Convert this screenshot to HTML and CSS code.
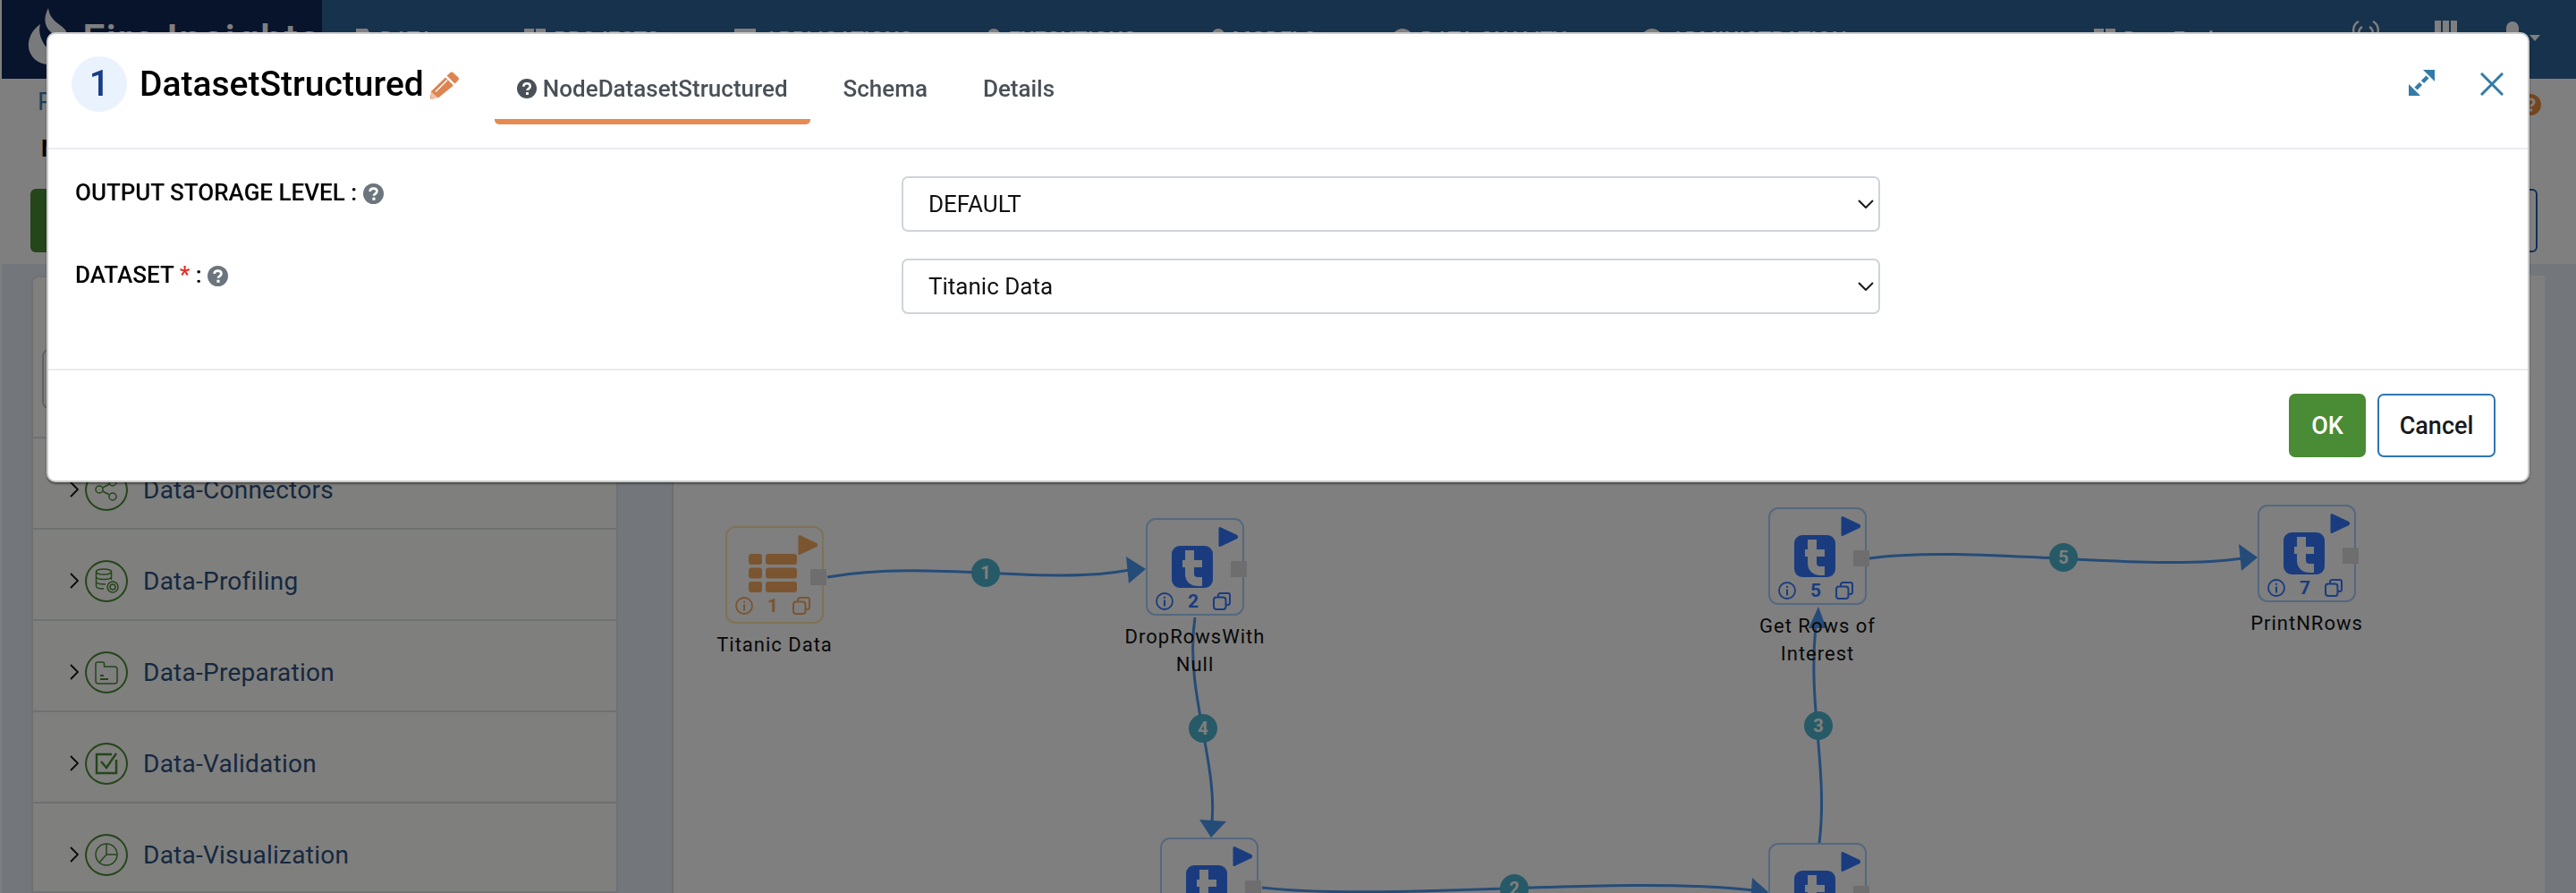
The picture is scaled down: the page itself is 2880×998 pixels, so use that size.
FILE: index.html
```html
<!DOCTYPE html>
<html>
<head>
    <title>Fire Insights - Workflow</title>
    <link rel="stylesheet" href="styles.css">
</head>
<body>
    <svg class="icon-defs" width="0" height="0">
        <symbol id="help" viewBox="0 0 24 24">
            <circle cx="12" cy="12" r="12" fill="currentColor"/>
            <path d="M8 9.5c0-2.4 1.8-3.7 4.1-3.7 2.2 0 4 1.3 4 3.4 0 2.9-3.6 2.8-3.6 5.1" fill="none" stroke="#fff" stroke-width="2.8"/>
            <rect x="10.9" y="16.4" width="3.2" height="3.2" fill="#fff"/>
        </symbol>
        <symbol id="info" viewBox="0 0 20 20">
            <circle cx="10" cy="10" r="9" fill="none" stroke="currentColor" stroke-width="1.8"/>
            <rect x="9" y="8.5" width="2" height="7" fill="currentColor"/>
            <rect x="9" y="4.8" width="2" height="2" fill="currentColor"/>
        </symbol>
        <symbol id="copy" viewBox="0 0 20 20">
            <rect x="1" y="5.5" width="13.5" height="13.5" rx="3" fill="none" stroke="currentColor" stroke-width="2"/>
            <path d="M6 5.5V3.5a2.5 2.5 0 0 1 2.5-2.5H17a2 2 0 0 1 2 2v8.5a2.5 2.5 0 0 1-2.5 2.5h-2" fill="none" stroke="currentColor" stroke-width="2"/>
        </symbol>
        <symbol id="play" viewBox="0 0 22 24">
            <path d="M2 2.5 20 11a1.2 1.2 0 0 1 0 2L2 21.5z" fill="currentColor" stroke="currentColor" stroke-width="3" stroke-linejoin="round"/>
        </symbol>
        <symbol id="tile" viewBox="0 0 46 47">
            <rect width="46" height="47" rx="9" fill="#3478ff"/>
            <path d="M20 5V31Q20 40 30 40H34" fill="none" stroke="#fff" stroke-width="10"/>
            <rect x="12" y="16" width="22" height="8" fill="#fff"/>
        </symbol>
        <symbol id="rows" viewBox="0 0 54 43">
            <rect x="0" y="0" width="15" height="12" rx="3" fill="currentColor"/>
            <rect x="19" y="0" width="35" height="12" rx="3" fill="currentColor"/>
            <rect x="0" y="15.500" width="15" height="12" rx="3" fill="currentColor"/>
            <rect x="19" y="15.500" width="35" height="12" rx="3" fill="currentColor"/>
            <rect x="0" y="31" width="15" height="12" rx="3" fill="currentColor"/>
            <rect x="19" y="31" width="35" height="12" rx="3" fill="currentColor"/>
        </symbol>
        <symbol id="chev" viewBox="0 0 10 20">
            <path d="M1 2 9 10 1 18" fill="none" stroke="currentColor" stroke-width="1.8"/>
        </symbol>
    </svg>

    <div class="page">
        <header class="nav">
            <div class="brand">
                <svg class="flame" viewBox="0 0 50 66" width="50" height="66">
                    <path d="M24 0C18 12 20 20 26 26C30 32 42 32 44 26C40 18 26 16 24 0Z" fill="#fff"/>
                    <path d="M15 18C6 24 1 34 2 44C3 54 12 62 22 63C34 64 44 56 46 46C36 50 24 50 18 38C15 32 13 26 15 18Z" fill="#fff"/>
                </svg>
                <span class="brand-name">Fire Insights</span>
            </div>
            <nav class="nav-items">
                <a class="nav-item"><i class="nav-ico nav-ico-file"></i>DATA</a>
                <a class="nav-item"><i class="nav-ico nav-ico-book"></i>PROJECTS</a>
                <a class="nav-item"><i class="nav-ico nav-ico-win"></i>APPLICATIONS</a>
                <a class="nav-item"><i class="nav-ico nav-ico-small"></i>EXECUTIONS</a>
                <a class="nav-item"><i class="nav-ico nav-ico-small"></i>MODELS</a>
                <a class="nav-item"><i class="nav-ico nav-ico-round"></i>DATA QUALITY</a>
                <a class="nav-item"><i class="nav-ico nav-ico-ring"></i>ADMINISTRATION</a>
            </nav>
            <div class="nav-right">
                <a class="nav-item"><i class="nav-ico nav-ico-book"></i>Data Explorer</a>
                <svg class="nav-wifi" viewBox="0 0 34 20" width="34" height="20">
                    <path d="M6 20C1 12 3 4 9 1M28 20C33 12 31 4 25 1M11 19C8 14 9 9 13 7M23 19C26 14 25 9 21 7" fill="none" stroke="#fff" stroke-width="2.400"/>
                    <circle cx="17" cy="16" r="3" fill="#fff"/>
                </svg>
                <div class="nav-grid"><i></i><i></i><i></i></div>
                <div class="nav-user"><i class="nav-head"></i><i class="nav-caret"></i></div>
            </div>
        </header>

        <section class="subheader">
            <div class="crumbs">
                <span>Pipelines</span>
                <svg class="crumb-help"><use href="#help"/></svg>
            </div>
            <div class="wf-name">Name</div>
            <div class="toolbar">
                <button class="tool-btn tool-save">Save</button>
                <button class="tool-btn tool-run">Run</button>
            </div>
        </section>

        <section class="workspace">
            <div class="panel">
                <aside class="sidebar">
                    <div class="side-head">
                        <input class="side-search" type="text">
                    </div>
                    <div class="side-row">
                        <svg class="side-chev"><use href="#chev"/></svg>
                        <span class="side-ico">
                            <svg viewBox="0 0 28 28" width="28" height="28"><circle cx="6" cy="14" r="4"/><circle cx="21" cy="6" r="4"/><circle cx="21" cy="22" r="4"/><path d="M9.500 12 17.500 8M9.500 16 17.500 20"/></svg>
                        </span>
                        <span class="side-text">Data-Connectors</span>
                    </div>
                    <div class="side-row">
                        <svg class="side-chev"><use href="#chev"/></svg>
                        <span class="side-ico">
                            <svg viewBox="0 0 28 28" width="28" height="28"><ellipse cx="11" cy="4" rx="8.500" ry="3"/><path d="M2.500 4V20C2.500 22 6 23 11 23M19.500 4V13M2.500 9.500C2.500 11.500 6 12.500 11 12.500S19.500 11.500 19.500 9.500M2.500 15C2.500 17 6 18 13 18"/><circle cx="21" cy="21" r="6"/><circle cx="21" cy="21" r="3"/></svg>
                        </span>
                        <span class="side-text">Data-Profiling</span>
                    </div>
                    <div class="side-row">
                        <svg class="side-chev"><use href="#chev"/></svg>
                        <span class="side-ico">
                            <svg viewBox="0 0 28 28" width="28" height="28"><path d="M2 5A2 2 0 0 1 4 3H9.500A2 2 0 0 1 11.500 5V8H23A3 3 0 0 1 26 11V24A3 3 0 0 1 23 27H5A3 3 0 0 1 2 24Z"/><path d="M7 18H11M7 22H16" stroke-width="2"/></svg>
                        </span>
                        <span class="side-text">Data-Preparation</span>
                    </div>
                    <div class="side-row">
                        <svg class="side-chev"><use href="#chev"/></svg>
                        <span class="side-ico">
                            <svg viewBox="0 0 28 28" width="28" height="28"><path d="M25 10V25H3V4H20" stroke-width="2.400"/><path d="M8 12 14 19 25 3" stroke-width="2.400"/></svg>
                        </span>
                        <span class="side-text">Data-Validation</span>
                    </div>
                    <div class="side-row">
                        <svg class="side-chev"><use href="#chev"/></svg>
                        <span class="side-ico">
                            <svg viewBox="0 0 28 28" width="28" height="28"><circle cx="14" cy="14" r="12"/><path d="M14 2V14H26M14 14 6 23"/></svg>
                        </span>
                        <span class="side-text">Data-Visualization</span>
                    </div>
                </aside>
                <div class="gutter"></div>
                <main class="canvas">
                    <svg class="edges" width="2091" height="690" viewBox="754 308 2091 690">
                        <path class="edge" d="M926 645C1040 625 1170 655 1264 637"/>
                        <path class="arrow" d="M1282 636 1260 622 1263 652Z"/>
                        <path class="edge" d="M1337 690C1325 770 1362 850 1356 918"/>
                        <path class="arrow" d="M1355 936 1342 916 1372 918Z"/>
                        <path class="edge" d="M2035 942C2045 860 2022 790 2031 700"/>
                        <path class="arrow" d="M2034 678 2023 702 2043 702Z"/>
                        <path class="edge" d="M2091 624C2200 608 2400 640 2508 624"/>
                        <path class="arrow" d="M2525 623 2504 608 2507 638Z"/>
                        <path class="edge" d="M1412 992C1560 1008 1800 978 1962 995"/>
                        <path class="arrow" d="M1978 997 1960 981 1958 1011Z"/>
                        <g class="badge"><circle cx="1103" cy="640" r="16"/><text x="1103" y="647">1</text></g>
                        <g class="badge"><circle cx="1346" cy="814" r="16"/><text x="1346" y="821">4</text></g>
                        <g class="badge"><circle cx="2034" cy="811" r="16"/><text x="2034" y="818">3</text></g>
                        <g class="badge"><circle cx="2308" cy="623" r="16"/><text x="2308" y="630">5</text></g>
                        <g class="badge"><circle cx="1694" cy="993" r="16"/><text x="1694" y="1000">2</text></g>
                    </svg>

                    <div class="node node-source node-a">
                        <div class="node-box">
                            <svg class="node-play"><use href="#play"/></svg>
                            <svg class="node-rows"><use href="#rows"/></svg>
                            <div class="node-foot">
                                <svg class="foot-ico"><use href="#info"/></svg>
                                <b>1</b>
                                <svg class="foot-ico"><use href="#copy"/></svg>
                            </div>
                            <i class="node-port"></i>
                        </div>
                        <div class="node-label">Titanic Data</div>
                    </div>
                    <div class="node node-b">
                        <div class="node-box">
                            <svg class="node-play"><use href="#play"/></svg>
                            <svg class="node-tile"><use href="#tile"/></svg>
                            <div class="node-foot">
                                <svg class="foot-ico"><use href="#info"/></svg>
                                <b>2</b>
                                <svg class="foot-ico"><use href="#copy"/></svg>
                            </div>
                            <i class="node-port"></i>
                        </div>
                        <div class="node-label">DropRowsWith<br>Null</div>
                    </div>
                    <div class="node node-c">
                        <div class="node-box">
                            <svg class="node-play"><use href="#play"/></svg>
                            <svg class="node-tile"><use href="#tile"/></svg>
                            <i class="node-port"></i>
                        </div>
                    </div>
                    <div class="node node-d">
                        <div class="node-box">
                            <svg class="node-play"><use href="#play"/></svg>
                            <svg class="node-tile"><use href="#tile"/></svg>
                            <div class="node-foot">
                                <svg class="foot-ico"><use href="#info"/></svg>
                                <b>5</b>
                                <svg class="foot-ico"><use href="#copy"/></svg>
                            </div>
                            <i class="node-port"></i>
                        </div>
                        <div class="node-label">Get Rows of<br>Interest</div>
                    </div>
                    <div class="node node-e">
                        <div class="node-box">
                            <svg class="node-play"><use href="#play"/></svg>
                            <svg class="node-tile"><use href="#tile"/></svg>
                            <i class="node-port"></i>
                        </div>
                    </div>
                    <div class="node node-f">
                        <div class="node-box">
                            <svg class="node-play"><use href="#play"/></svg>
                            <svg class="node-tile"><use href="#tile"/></svg>
                            <div class="node-foot">
                                <svg class="foot-ico"><use href="#info"/></svg>
                                <b>7</b>
                                <svg class="foot-ico"><use href="#copy"/></svg>
                            </div>
                            <i class="node-port"></i>
                        </div>
                        <div class="node-label">PrintNRows</div>
                    </div>
                </main>
            </div>
        </section>
    </div>

    <div class="backdrop"></div>

    <div class="modal">
        <div class="modal-header">
            <span class="step-no">1</span>
            <h1 class="modal-title">DatasetStructured</h1>
            <svg class="title-edit" viewBox="0 0 33 32" width="33" height="32">
                <path d="M22 2.500a2.800 2.800 0 0 1 4 0L31 7a2.800 2.800 0 0 1 0 4l-3.500 3.500-9-9Z" fill="currentColor"/>
                <path d="M17 7.500l9 9L9.500 30 1.500 32 0 31l1-8Z" fill="currentColor"/>
                <path d="M19 10.500 6 23.500" stroke="#fff" stroke-width="1.500"/>
                <path d="M1 23.500l8 7-8 1.500Z" fill="#fff" opacity=".5"/>
            </svg>
            <div class="tabs">
                <a class="tab tab-active"><svg class="tab-help"><use href="#help"/></svg>NodeDatasetStructured</a>
                <a class="tab">Schema</a>
                <a class="tab">Details</a>
            </div>
            <div class="modal-tools">
                <svg class="tool-expand" viewBox="0 0 29 29" width="29" height="29">
                    <path d="M16 0H29V13Z" fill="currentColor"/>
                    <path d="M0 16V29H13Z" fill="currentColor"/>
                    <path d="M21 8 15.500 13.500M13.500 15.500 8 21" stroke="currentColor" stroke-width="4.500"/>
                </svg>
                <svg class="tool-close" viewBox="0 0 26 26" width="26" height="26">
                    <path d="M1 1 25 25M25 1 1 25" stroke="currentColor" stroke-width="3"/>
                </svg>
            </div>
        </div>

        <div class="modal-body">
            <div class="form-row">
                <label class="form-label">OUTPUT STORAGE LEVEL : <svg class="label-help"><use href="#help"/></svg></label>
                <div class="select-wrap">
                    <select class="form-select">
                        <option>DEFAULT</option>
                        <option>MEMORY_ONLY</option>
                        <option>DISK_ONLY</option>
                    </select>
                    <svg class="select-chev" viewBox="0 0 18 10" width="18" height="10"><path d="M1 1 9 9 17 1" fill="none" stroke="#1a1a1a" stroke-width="2"/></svg>
                </div>
            </div>
            <div class="form-row">
                <label class="form-label">DATASET <span class="req">*</span> : <svg class="label-help"><use href="#help"/></svg></label>
                <div class="select-wrap">
                    <select class="form-select">
                        <option>Titanic Data</option>
                    </select>
                    <svg class="select-chev" viewBox="0 0 18 10" width="18" height="10"><path d="M1 1 9 9 17 1" fill="none" stroke="#1a1a1a" stroke-width="2"/></svg>
                </div>
            </div>
        </div>

        <div class="modal-footer">
            <button class="btn btn-ok">OK</button>
            <button class="btn btn-cancel">Cancel</button>
        </div>
    </div>
</body>
</html>
```

FILE: styles.css
```css
* {
    box-sizing: border-box;
}
body {
    font-family: Roboto, "Liberation Sans", sans-serif;
    margin: 0;
    height: 100vh;
    overflow: hidden;
    background-color: #fff;
}
.icon-defs {
    position: absolute;
}
.page {
    height: 998px;
    overflow: hidden;
    border-left: 2px solid #fff;
}

/* top bar */
.nav {
    display: flex;
    align-items: center;
    height: 88px;
    background-color: #2e6498;
    color: #fff;
}
.brand {
    display: flex;
    align-items: center;
    width: 358px;
    height: 88px;
    padding-left: 28px;
    background-color: #102856;
}
.flame {
    margin: -4px 12px 0 0;
    flex: none;
    opacity: .95;
}
.brand-name {
    font-size: 46px;
    font-weight: 500;
    letter-spacing: 1px;
    white-space: nowrap;
}
.nav-items {
    display: flex;
    gap: 84px;
    margin-left: 38px;
}
.nav-item {
    display: flex;
    align-items: center;
    gap: 9px;
    font-size: 24px;
    font-weight: 500;
    white-space: nowrap;
}
.nav-item:first-child {
    margin-right: 18px;
}
.nav-ico {
    display: block;
    width: 24px;
    height: 24px;
    background-color: #fff;
}
.nav-ico-file {
    width: 18px;
    clip-path: polygon(0 0, 70% 0, 100% 40%, 100% 100%, 0 100%);
}
.nav-ico-book {
    background: linear-gradient(90deg, #fff 44%, transparent 44%, transparent 56%, #fff 56%);
}
.nav-ico-win {
    height: 24px;
    background: none;
    border: 3px solid #fff;
    border-top-width: 7px;
}
.nav-ico-small {
    width: 14px;
    border-radius: 7px 7px 2px 2px;
}
.nav-ico-round {
    border-radius: 50%;
}
.nav-ico-ring {
    background: none;
    border: 4px solid #fff;
    border-radius: 50%;
}
.nav-right {
    display: flex;
    align-items: center;
    margin-left: auto;
    padding-right: 40px;
}
.nav-wifi {
    margin: -22px 0 0 92px;
}
.nav-grid {
    display: flex;
    gap: 2px;
    margin: -18px 0 0 60px;
}
.nav-grid i {
    display: block;
    width: 7px;
    height: 24px;
    background-color: #fff;
}
.nav-user {
    display: flex;
    align-items: center;
    gap: 12px;
    margin: -16px 0 0 55px;
}
.nav-head {
    display: block;
    width: 14px;
    height: 24px;
    border-radius: 7px;
    background-color: #fff;
}
.nav-caret {
    display: block;
    margin-top: 12px;
    border-top: 7px solid #fff;
    border-left: 6px solid transparent;
    border-right: 6px solid transparent;
}

/* strip under the nav */
.subheader {
    height: 207px;
    padding: 8px 8px 0 32px;
    background-color: #fff;
}
.crumbs {
    display: flex;
    justify-content: space-between;
    align-items: center;
    height: 34px;
    padding: 0 0 0 8px;
    font-size: 28px;
    color: #3d7fb0;
}
.crumb-help {
    width: 24px;
    height: 24px;
    margin: 8px 31px 0 0;
    color: #e98d3e;
}
.wf-name {
    height: 34px;
    margin-top: 19px;
    padding-left: 12px;
    font-size: 26px;
    font-weight: 700;
    line-height: 34px;
    color: #000;
}
.toolbar {
    display: flex;
    justify-content: space-between;
    margin: 28px 35px 0 0;
}
.tool-btn {
    width: 120px;
    height: 71px;
    border-radius: 6px;
    font-size: 26px;
}
.tool-save {
    background-color: #4a8b35;
    border: none;
}
.tool-run {
    background-color: #fff;
    border: 2px solid #1f5fa8;
}

/* sidebar + canvas */
.workspace {
    height: 703px;
    padding: 13px 35px 0 33px;
    background-color: #e6ecf6;
}
.panel {
    display: flex;
    height: 690px;
    border-top: 0;
}
.sidebar {
    width: 656px;
    flex: none;
    background-color: #fefffc;
    border: 2px solid #dfe1e6;
    border-top-left-radius: 8px;
}
.side-head {
    height: 180px;
    padding: 80px 0 0 10px;
    border-bottom: 2px solid #dee0e0;
}
.side-search {
    display: block;
    width: 600px;
    height: 67px;
    border: 2px solid #c0c0c0;
    border-radius: 8px;
}
.side-row {
    display: flex;
    align-items: center;
    height: 102px;
    padding: 14px 0 0 41px;
    border-bottom: 2px solid #dee0e0;
}
.side-chev {
    width: 10px;
    height: 20px;
    color: #111;
}
.side-ico {
    display: flex;
    align-items: center;
    justify-content: center;
    width: 48px;
    height: 47px;
    margin: 0 17px 0 7px;
    border: 2px solid #4a8b35;
    border-radius: 50%;
}
.side-ico svg {
    fill: none;
    stroke: #4a8b35;
    stroke-width: 1.500;
}
.side-text {
    font-size: 28px;
    letter-spacing: .25px;
    color: #2e507e;
}
.gutter {
    width: 62px;
    flex: none;
    border-right: 2px solid #d9dce2;
}
.canvas {
    position: relative;
    flex: 1;
    background-color: #fff;
}
.edges {
    position: absolute;
    left: 0;
    top: 0;
}
.edge {
    fill: none;
    stroke: #4a98f0;
    stroke-width: 3;
}
.arrow {
    fill: #4a98f0;
}
.badge circle {
    fill: #4cb4cc;
}
.badge text {
    font-family: Roboto, sans-serif;
    font-size: 20px;
    font-weight: 700;
    text-anchor: middle;
    fill: #fff;
}

/* workflow nodes */
.node {
    position: absolute;
    width: 110px;
    color: #3478ff;
}
.node-a { left: 58px; top: 280px; }
.node-b { left: 528px; top: 271px; }
.node-c { left: 544px; top: 628px; }
.node-d { left: 1224px; top: 259px; }
.node-e { left: 1224px; top: 634px; }
.node-f { left: 1771px; top: 256px; }
.node-box {
    position: relative;
    height: 109px;
    padding: 29px 0 0 27px;
    border: 2px solid #a8d0ff;
    border-radius: 11px;
}
.node-source {
    color: #f4aa60;
}
.node-source .node-box {
    border-color: #ffe6ac;
}
.node-play {
    position: absolute;
    left: 79px;
    top: 7px;
    width: 22px;
    height: 24px;
}
.node-tile {
    display: block;
    width: 46px;
    height: 47px;
}
.node-rows {
    display: block;
    width: 54px;
    height: 43px;
    margin: 0 0 4px -3px;
}
.node-foot {
    display: flex;
    justify-content: space-between;
    align-items: center;
    width: 84px;
    height: 20px;
    margin: 5px 0 0 -18px;
    font-size: 21px;
    line-height: 20px;
}
.foot-ico {
    display: block;
    width: 20px;
    height: 20px;
}
.node-port {
    position: absolute;
    left: 93px;
    top: 46px;
    width: 18px;
    height: 18px;
    background-color: #dcdcdc;
}
.node-label {
    margin: 8px -40px 0;
    font-size: 22px;
    letter-spacing: 1px;
    line-height: 31px;
    text-align: center;
    color: #111;
}

.backdrop {
    position: fixed;
    left: 0;
    top: 0;
    right: 0;
    bottom: 0;
    background-color: rgba(0, 0, 0, 0.5);
}

/* dialog */
.modal {
    position: absolute;
    left: 52px;
    top: 36px;
    width: 2776px;
    height: 503px;
    background-color: #fff;
    border: 2px solid #cbcbcb;
    border-radius: 10px;
    box-shadow: 0 2px 2px rgba(0, 0, 0, 0.4);
}
.modal-header {
    display: flex;
    align-items: flex-start;
    height: 129px;
    padding: 25px 0 0 26px;
    border-bottom: 2px solid #ebebf2;
}
.step-no {
    width: 62px;
    height: 62px;
    flex: none;
    border-radius: 50%;
    background-color: #eaf3fd;
    font-size: 40px;
    font-weight: 500;
    line-height: 62px;
    text-align: center;
    color: #163d87;
}
.modal-title {
    margin: 8px 0 0 14px;
    font-size: 39px;
    font-weight: 500;
    line-height: 47px;
    color: #000;
}
.title-edit {
    flex: none;
    margin: 16px 0 0 7px;
    color: #dd8550;
}
.tabs {
    display: flex;
    gap: 12px;
    height: 76px;
    margin-left: 39px;
}
.tab {
    display: flex;
    align-items: flex-start;
    height: 76px;
    padding: 20px 25px 0;
    font-size: 26px;
    font-weight: 500;
    line-height: 33px;
    color: #495057;
    white-space: nowrap;
}
.tab-active {
    border-bottom: 6px solid #e78a52;
    border-radius: 0 0 5px 5px;
}
.tab-help {
    width: 22px;
    height: 22px;
    margin: 5px 7px 0 0;
    color: #495057;
}
.modal-tools {
    display: flex;
    gap: 51px;
    margin: 15px 27px 0 auto;
    color: #337ba8;
}
.tool-close {
    margin-top: 3px;
}
.modal-body {
    display: flex;
    flex-direction: column;
    gap: 30px;
    height: 245px;
    padding: 30px;
}
.form-row {
    display: grid;
    grid-template-columns: 924px 1094px;
}
.form-label {
    display: block;
    padding-top: 2px;
    font-size: 26px;
    font-weight: 500;
    line-height: 32px;
    color: #000;
}
.req {
    color: #e8281e;
}
.label-help {
    width: 23px;
    height: 23px;
    vertical-align: -4px;
    color: #6c757d;
}
.select-wrap {
    position: relative;
}
.form-select {
    display: block;
    width: 100%;
    height: 62px;
    padding: 0 28px;
    appearance: none;
    background-color: #fff;
    border: 2px solid #ced4da;
    border-radius: 7px;
    font-family: Roboto, sans-serif;
    font-size: 26px;
    color: #111;
}
.select-chev {
    position: absolute;
    right: 7px;
    top: 26px;
    pointer-events: none;
}
.modal-footer {
    display: flex;
    justify-content: flex-end;
    gap: 13px;
    height: 125px;
    padding: 26px 36px 0 0;
    border-top: 2px solid #ebebf2;
}
.btn {
    height: 71px;
    border-radius: 7px;
    font-family: Roboto, sans-serif;
    font-size: 27px;
    font-weight: 500;
    cursor: pointer;
}
.btn-ok {
    width: 86px;
    background-color: #4a8b35;
    border: none;
    color: #fff;
}
.btn-cancel {
    width: 132px;
    background-color: #fff;
    border: 2px solid #2f75b5;
    color: #1a1a1a;
}
```
